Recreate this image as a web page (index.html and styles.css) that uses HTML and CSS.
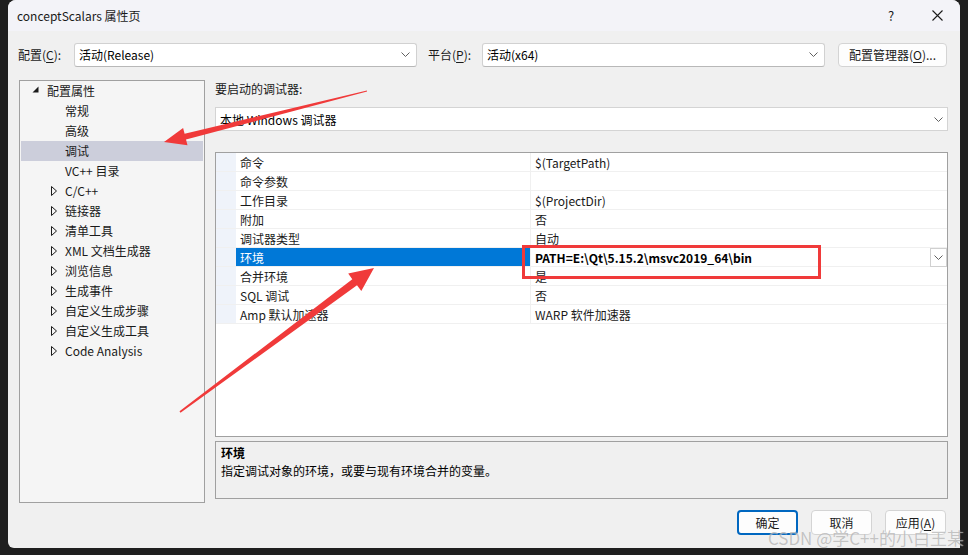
FILE: index.html
```html
<!DOCTYPE html>
<html lang="zh-CN">
<head>
    <meta charset="UTF-8">
    <meta name="viewport" content="width=device-width, initial-scale=1.0">
    <title>conceptScalars 属性页</title>
    <link rel="stylesheet" href="styles.css">
</head>
<body>
    <div class="dialog">
        <div class="titlebar">
            <span class="title">conceptScalars 属性页</span>
            <span class="tb-btn help">?</span>
            <span class="tb-btn close">
                <svg width="11" height="11" viewBox="0 0 11 11"><path d="M0.5 0.5 L10.5 10.5 M10.5 0.5 L0.5 10.5" stroke="#1a1a1a" stroke-width="1.1" fill="none"/></svg>
            </span>
        </div>

        <div class="toolbar">
            <span class="lbl cfg-lbl">配置(<u>C</u>):</span>
            <div class="combo top-combo">
                <span>活动(Release)</span>
                <svg class="chev" width="9" height="5" viewBox="0 0 9 5"><polyline points="0.5,0.5 4.5,4.5 8.5,0.5" fill="none" stroke="#606060"/></svg>
            </div>
            <span class="lbl plat-lbl">平台(<u>P</u>):</span>
            <div class="combo top-combo">
                <span>活动(x64)</span>
                <svg class="chev" width="9" height="5" viewBox="0 0 9 5"><polyline points="0.5,0.5 4.5,4.5 8.5,0.5" fill="none" stroke="#606060"/></svg>
            </div>
            <button class="btn cfg-mgr">配置管理器(<u>O</u>)...</button>
        </div>

        <div class="main">
            <div class="tree">
                <div class="node lvl0"><span class="tw"><svg width="7" height="7" viewBox="0 0 7 7"><polygon points="6.5,0.5 6.5,6.5 0.5,6.5" fill="#1a1a1a"/></svg></span>配置属性</div>
                <div class="node lvl1"><span class="tw"></span>常规</div>
                <div class="node lvl1"><span class="tw"></span>高级</div>
                <div class="node lvl1 selected"><span class="tw"></span>调试</div>
                <div class="node lvl1"><span class="tw"></span>VC++ 目录</div>
                <div class="node lvl1"><span class="tw"><svg width="6" height="10" viewBox="0 0 6 10"><polygon points="0.5,0.5 5.5,5 0.5,9.5" fill="none" stroke="#1a1a1a"/></svg></span>C/C++</div>
                <div class="node lvl1"><span class="tw"><svg width="6" height="10" viewBox="0 0 6 10"><polygon points="0.5,0.5 5.5,5 0.5,9.5" fill="none" stroke="#1a1a1a"/></svg></span>链接器</div>
                <div class="node lvl1"><span class="tw"><svg width="6" height="10" viewBox="0 0 6 10"><polygon points="0.5,0.5 5.5,5 0.5,9.5" fill="none" stroke="#1a1a1a"/></svg></span>清单工具</div>
                <div class="node lvl1"><span class="tw"><svg width="6" height="10" viewBox="0 0 6 10"><polygon points="0.5,0.5 5.5,5 0.5,9.5" fill="none" stroke="#1a1a1a"/></svg></span>XML 文档生成器</div>
                <div class="node lvl1"><span class="tw"><svg width="6" height="10" viewBox="0 0 6 10"><polygon points="0.5,0.5 5.5,5 0.5,9.5" fill="none" stroke="#1a1a1a"/></svg></span>浏览信息</div>
                <div class="node lvl1"><span class="tw"><svg width="6" height="10" viewBox="0 0 6 10"><polygon points="0.5,0.5 5.5,5 0.5,9.5" fill="none" stroke="#1a1a1a"/></svg></span>生成事件</div>
                <div class="node lvl1"><span class="tw"><svg width="6" height="10" viewBox="0 0 6 10"><polygon points="0.5,0.5 5.5,5 0.5,9.5" fill="none" stroke="#1a1a1a"/></svg></span>自定义生成步骤</div>
                <div class="node lvl1"><span class="tw"><svg width="6" height="10" viewBox="0 0 6 10"><polygon points="0.5,0.5 5.5,5 0.5,9.5" fill="none" stroke="#1a1a1a"/></svg></span>自定义生成工具</div>
                <div class="node lvl1"><span class="tw"><svg width="6" height="10" viewBox="0 0 6 10"><polygon points="0.5,0.5 5.5,5 0.5,9.5" fill="none" stroke="#1a1a1a"/></svg></span>Code Analysis</div>
            </div>

            <div class="right">
                <div class="dbg-lbl">要启动的调试器:</div>
                <div class="combo dbg-combo">
                    <span>本地 Windows 调试器</span>
                    <svg class="chev" width="9" height="5" viewBox="0 0 9 5"><polyline points="0.5,0.5 4.5,4.5 8.5,0.5" fill="none" stroke="#606060"/></svg>
                </div>

                <div class="grid">
                    <div class="row"><span class="gutter"></span><span class="name">命令</span><span class="val">$(TargetPath)</span></div>
                    <div class="row"><span class="gutter"></span><span class="name">命令参数</span><span class="val"></span></div>
                    <div class="row"><span class="gutter"></span><span class="name">工作目录</span><span class="val">$(ProjectDir)</span></div>
                    <div class="row"><span class="gutter"></span><span class="name">附加</span><span class="val">否</span></div>
                    <div class="row"><span class="gutter"></span><span class="name">调试器类型</span><span class="val">自动</span></div>
                    <div class="row active"><span class="gutter"></span><span class="name">环境</span><span class="val"><b>PATH=E:\Qt\5.15.2\msvc2019_64\bin</b><span class="drop"><svg width="9" height="5" viewBox="0 0 9 5"><polyline points="0.5,0.5 4.5,4.5 8.5,0.5" fill="none" stroke="#606060"/></svg></span></span></div>
                    <div class="row"><span class="gutter"></span><span class="name">合并环境</span><span class="val">是</span></div>
                    <div class="row"><span class="gutter"></span><span class="name">SQL 调试</span><span class="val">否</span></div>
                    <div class="row"><span class="gutter"></span><span class="name">Amp 默认加速器</span><span class="val">WARP 软件加速器</span></div>
                </div>

                <div class="desc">
                    <div class="desc-title">环境</div>
                    <div>指定调试对象的环境，或要与现有环境合并的变量。</div>
                </div>
            </div>
        </div>

        <div class="footer">
            <button class="btn ok">确定</button>
            <button class="btn">取消</button>
            <button class="btn">应用(<u>A</u>)</button>
        </div>
    </div>

    <!-- annotations drawn over the screenshot -->
    <div class="redbox"></div>
    <svg class="arrows" width="968" height="555" viewBox="0 0 968 555">
        <polygon points="367.1,91.6 186.0,139.5 187.5,145.3 164,142 183.1,127.9 184.6,133.7 366.9,90.4" fill="#f03a3a"/>
        <polygon points="180.5,412.7 357.0,285.3 361.3,291 374,268 348.2,273.6 352.3,279.3 179.5,411.3" fill="#f03a3a"/>
    </svg>
    <div class="watermark">CSDN @学C++的小白王某</div>
</body>
</html>
```

FILE: styles.css
```css
body {
    margin: 0;
    width: 968px;
    height: 555px;
    overflow: hidden;
    position: relative;
    background-color: #1f1f1f;
    font-family: "Noto Sans CJK SC", "Noto Sans", sans-serif;
    font-size: 12px;
    color: #000;
}
u {
    text-decoration-thickness: 1px;
    text-underline-offset: 2px;
}
.dialog {
    margin-left: 8px;
    width: 952px;
    height: 548px;
    background-color: #f0f0f0;
    border-radius: 8px 8px 0 6px;
    display: flex;
    flex-direction: column;
}
.titlebar {
    height: 31px;
    background-color: #f3f3f8;
    border-radius: 8px 8px 0 0;
    display: flex;
    align-items: center;
    padding-left: 9px;
}
.title {
    flex: 1;
    color: #1a1a1a;
}
.tb-btn {
    width: 46px;
    height: 31px;
    display: flex;
    align-items: center;
    justify-content: center;
}
.help {
    font-size: 13px;
    color: #1a1a1a;
}
.toolbar {
    display: flex;
    align-items: center;
    margin-top: 11px;
    height: 25px;
    padding-left: 10px;
}
.lbl {
    color: #1a1a1a;
}
.cfg-lbl {
    width: 56px;
}
.plat-lbl {
    width: 54px;
    margin-left: 11px;
}
.combo {
    box-sizing: border-box;
    height: 24px;
    background-color: #fff;
    border: 1px solid #d1d1d1;
    border-bottom-color: #b8b8b8;
    border-radius: 3px;
    display: flex;
    align-items: center;
    padding: 0 6px 0 4px;
}
.combo span {
    flex: 1;
}
.top-combo {
    width: 343px;
}
.btn {
    box-sizing: border-box;
    height: 25px;
    font-family: inherit;
    font-size: 12px;
    color: #1a1a1a;
    background-color: #fdfdfd;
    border: 1px solid #d4d4d4;
    border-radius: 4px;
    padding: 0;
}
.cfg-mgr {
    width: 109px;
    margin-left: 13px;
    height: 24px;
}
.main {
    display: flex;
    gap: 10px;
    margin-top: 13px;
    padding-left: 11px;
}
.tree {
    box-sizing: border-box;
    width: 186px;
    height: 423px;
    border: 1px solid #a0a0a0;
    background-color: #f5f5f5;
}
.node {
    box-sizing: border-box;
    height: 20px;
    padding-bottom: 2px;
    display: flex;
    align-items: center;
    margin: 0 1px;
    white-space: nowrap;
    color: #1a1a1a;
}
.node .tw {
    display: flex;
    align-items: center;
}
.lvl0 {
    padding-left: 10px;
}
.lvl0 .tw {
    width: 15px;
    padding-left: 1px;
    margin-top: -1px;
}
.lvl1 {
    padding-left: 29px;
}
.lvl1 .tw {
    width: 14px;
    padding-left: 1px;
    margin-top: 2px;
}
.node.selected {
    background-color: #cccedb;
}
.right {
    width: 733px;
    display: flex;
    flex-direction: column;
}
.dbg-lbl {
    line-height: 17px;
    padding-bottom: 10px;
    color: #1a1a1a;
}
.dbg-combo {
    width: 733px;
    border-radius: 0;
    border-color: #d4d4d4;
    padding-right: 4px;
}
.grid {
    box-sizing: border-box;
    height: 285px;
    margin-top: 21px;
    border: 1px solid #a0a0a0;
    background-color: #fff;
}
.row {
    display: flex;
    height: 19px;
    box-sizing: border-box;
    border-bottom: 1px solid #f0f0f0;
}
.gutter {
    width: 20px;
    background-color: #eff3fa;
}
.name {
    width: 290px;
    padding-left: 4px;
    border-right: 1px solid #f0f0f0;
    line-height: 20px;
    color: #1a1a1a;
}
.val {
    flex: 1;
    padding-left: 4px;
    line-height: 20px;
    display: flex;
    color: #1a1a1a;
}
.row.active .name {
    background-color: #0078d7;
    color: #fff;
}
.row.active b {
    flex: 1;
    color: #000;
}
.drop {
    box-sizing: border-box;
    width: 17px;
    height: 19px;
    border: 1px solid #d0d0d0;
    background-color: #fff;
    display: flex;
    align-items: center;
    justify-content: center;
}
.desc {
    box-sizing: border-box;
    height: 58px;
    margin-top: 4px;
    border: 1px solid #a0a0a0;
    padding: 2px 5px;
    line-height: 18px;
}
.desc-title {
    font-weight: bold;
}
.footer {
    display: flex;
    justify-content: flex-end;
    gap: 13px;
    margin-top: 7px;
    padding-right: 14px;
}
.footer .btn {
    width: 61px;
}
.footer .ok {
    border: 2px solid #0067c0;
}
.redbox {
    position: absolute;
    left: 522px;
    top: 245px;
    width: 293px;
    height: 28px;
    border: 3px solid #f03a3a;
}
.arrows {
    position: absolute;
    left: 0;
    top: 0;
    pointer-events: none;
}
.watermark {
    position: absolute;
    right: 4px;
    bottom: 5px;
    font-size: 17px;
    color: rgba(150, 150, 150, 0.55);
    text-shadow: 0 0 1px rgba(255, 255, 255, 0.6);
    white-space: nowrap;
}
```
